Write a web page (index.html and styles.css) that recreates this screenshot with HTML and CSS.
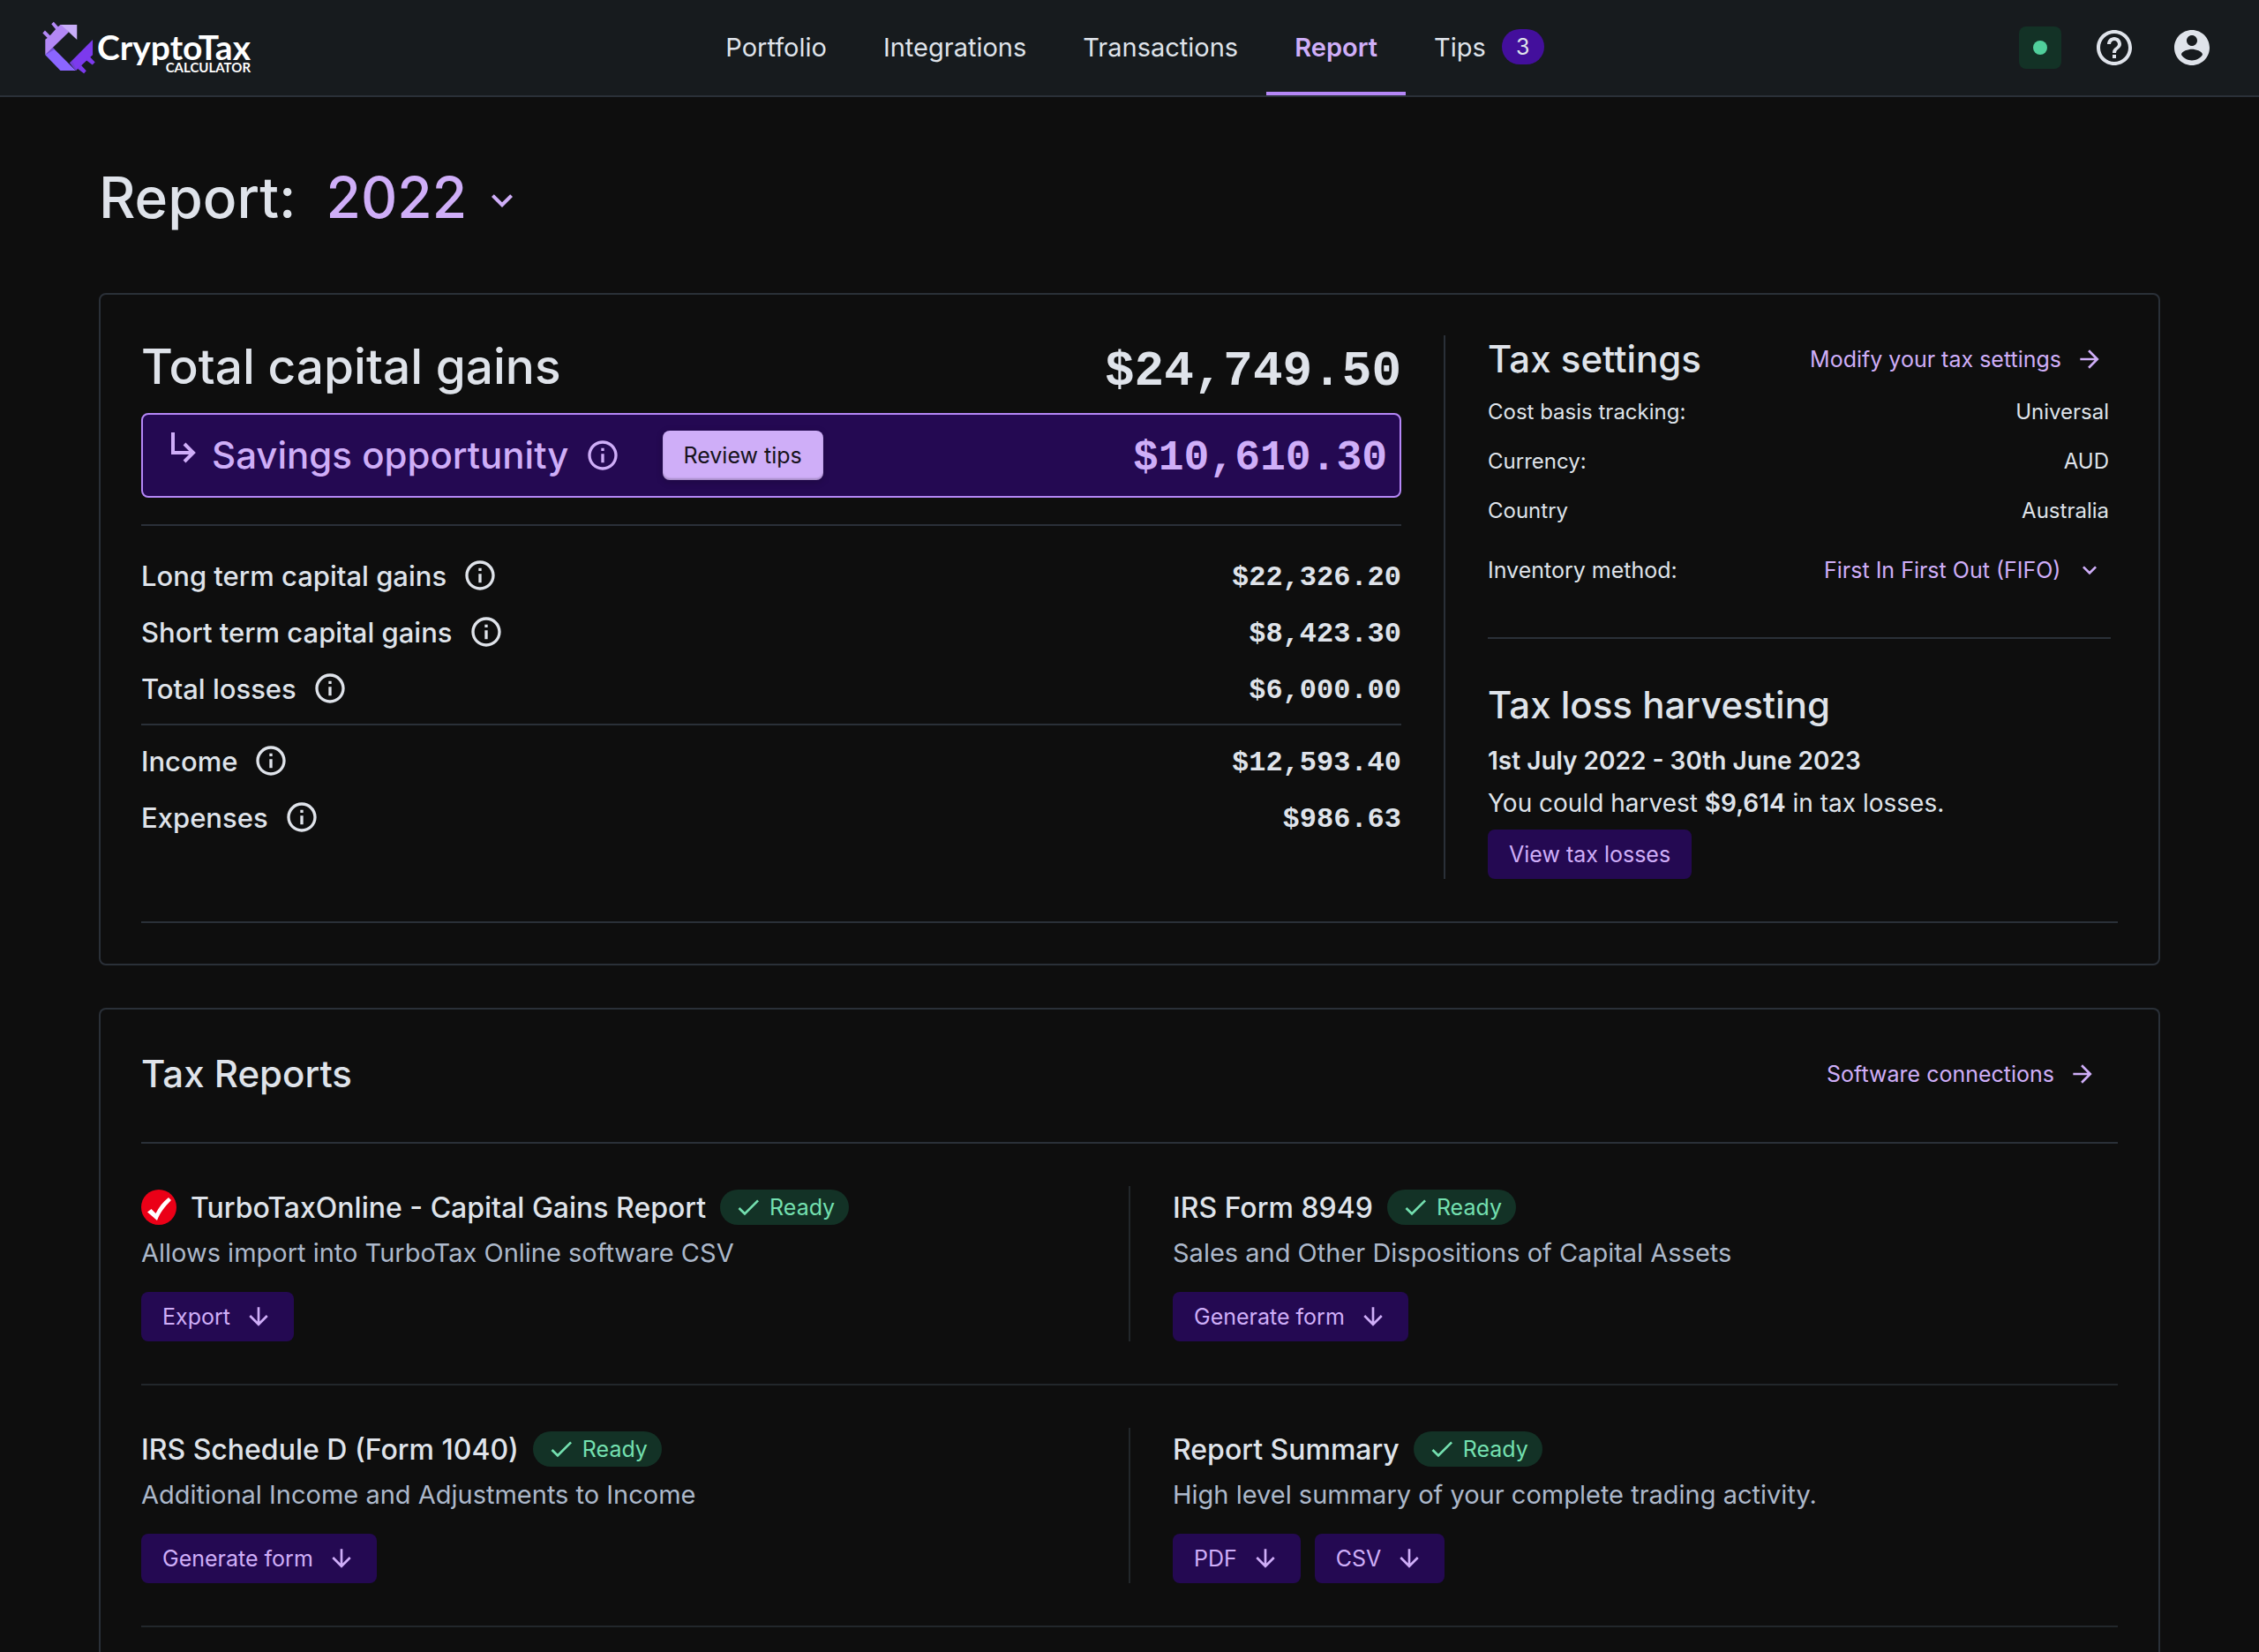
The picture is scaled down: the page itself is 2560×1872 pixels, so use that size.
FILE: index.html
```html
<!DOCTYPE html>
<html lang="en">
<head>
<meta charset="utf-8">
<title>CryptoTaxCalculator - Report</title>
<meta name="viewport" content="width=device-width, initial-scale=1">
<link rel="stylesheet" href="styles.css">
</head>
<body>
<svg class="sprite" aria-hidden="true">
  <symbol id="info" viewBox="0 0 24 24"><path d="M11 7h2v2h-2zm0 4h2v6h-2zm1-9C6.48 2 2 6.48 2 12s4.480 10 10 10 10-4.480 10-10S17.520 2 12 2zm0 18c-4.410 0-8-3.590-8-8s3.590-8 8-8 8 3.590 8 8-3.590 8-8 8z"/></symbol>
  <symbol id="chevron" viewBox="0 0 24 24"><path d="M16.590 8.590 12 13.170 7.410 8.590 6 10l6 6 6-6z"/></symbol>
  <symbol id="arrow-right" viewBox="0 0 24 24"><path d="m12 4-1.410 1.410L16.170 11H4v2h12.170l-5.580 5.590L12 20l8-8z"/></symbol>
  <symbol id="arrow-down" viewBox="0 0 24 24"><path d="m20 12-1.410-1.410L13 16.170V4h-2v12.170l-5.580-5.590L4 12l8 8z"/></symbol>
  <symbol id="check" viewBox="0 0 24 24"><path d="M9 16.170 4.830 12l-1.420 1.410L9 19 21 7l-1.410-1.410z"/></symbol>
</svg>

<header class="topbar">
  <a class="logo" href="#" aria-label="CryptoTaxCalculator home">
    <svg class="logo-mark" viewBox="22 22 182 180" aria-hidden="true">
      <path fill="#b388f5" d="M32 84 45 74 72 44 84 33H92L113 58 32 137z"/>
      <path fill="#b388f5" d="M23 62 31 53 50 72 42 81zM53 31 61 23 79 43 70 51z"/>
      <path fill="#c9aef9" d="M86 33H141V85z"/>
      <path fill="#8b66ff" d="M32 137 58 112 137 191H84z"/>
      <path fill="#7c3aed" d="M195 85V137L137 191 116 164z"/>
      <path fill="#7c3aed" d="M173 155 183 141 203 162 194 171zM143 184 155 172 173 192 165 201z"/>
      <path fill="#6a41c9" d="M116 164 124 157 140 189 137 191zM32 137 58 112 64 118z" opacity=".7"/>
    </svg>
    <span class="logo-text"><span class="logo-name">CryptoTax</span><span class="logo-sub">CALCULATOR</span></span>
  </a>
  <nav class="nav" aria-label="Main">
    <a href="#">Portfolio</a>
    <a href="#">Integrations</a>
    <a href="#">Transactions</a>
    <a class="current" href="#" aria-current="page">Report</a>
    <a href="#">Tips <span class="count">3</span></a>
  </nav>
  <div class="tools">
    <button class="status" type="button" aria-label="Status"><span class="dot"></span></button>
    <button class="tool" type="button" aria-label="Help">
      <svg viewBox="0 0 24 24"><path d="M11 18h2v-2h-2v2zm1-16C6.480 2 2 6.480 2 12s4.480 10 10 10 10-4.480 10-10S17.520 2 12 2zm0 18c-4.410 0-8-3.590-8-8s3.590-8 8-8 8 3.590 8 8-3.590 8-8 8zm0-14c-2.210 0-4 1.790-4 4h2c0-1.100.9-2 2-2s2 .9 2 2c0 2-3 1.750-3 5h2c0-2.250 3-2.500 3-5 0-2.210-1.790-4-4-4z"/></svg>
    </button>
    <button class="tool" type="button" aria-label="Account">
      <svg viewBox="0 0 24 24"><path d="M12 2C6.480 2 2 6.480 2 12s4.480 10 10 10 10-4.480 10-10S17.520 2 12 2zm0 3c1.660 0 3 1.340 3 3s-1.340 3-3 3-3-1.340-3-3 1.340-3 3-3zm0 14.200c-2.500 0-4.710-1.280-6-3.220.03-1.990 4-3.080 6-3.080 1.990 0 5.970 1.090 6 3.080-1.290 1.940-3.500 3.220-6 3.220z"/></svg>
    </button>
  </div>
</header>

<main class="page">
  <h1 class="page-title">
    <label for="year">Report:</label>
    <span class="picker picker-year">
      <select id="year"><option>2022</option></select>
      <svg aria-hidden="true"><use href="#chevron"/></svg>
    </span>
  </h1>

  <section class="card summary">
    <div class="summary-columns">
      <div class="gains">
        <div class="total"><h2>Total capital gains</h2><span class="amount">$24,749.50</span></div>
        <div class="savings">
          <svg class="bend" viewBox="0 0 28 52" aria-hidden="true"><path d="M2 0V23H25M15 13 25 23 15 33"/></svg>
          <span class="savings-label">Savings opportunity</span>
          <svg class="icon-info" aria-hidden="true"><use href="#info"/></svg>
          <button class="btn btn-light" type="button">Review tips</button>
          <span class="amount">$10,610.30</span>
        </div>
        <dl class="lines">
          <div><dt>Long term capital gains <svg class="icon-info" aria-hidden="true"><use href="#info"/></svg></dt><dd>$22,326.20</dd></div>
          <div><dt>Short term capital gains <svg class="icon-info" aria-hidden="true"><use href="#info"/></svg></dt><dd>$8,423.30</dd></div>
          <div><dt>Total losses <svg class="icon-info" aria-hidden="true"><use href="#info"/></svg></dt><dd>$6,000.00</dd></div>
        </dl>
        <dl class="lines lines-last">
          <div><dt>Income <svg class="icon-info" aria-hidden="true"><use href="#info"/></svg></dt><dd>$12,593.40</dd></div>
          <div><dt>Expenses <svg class="icon-info" aria-hidden="true"><use href="#info"/></svg></dt><dd>$986.63</dd></div>
        </dl>
      </div>
      <div class="side">
        <div class="side-head">
          <h3>Tax settings</h3>
          <a class="link" href="#">Modify your tax settings <svg aria-hidden="true"><use href="#arrow-right"/></svg></a>
        </div>
        <dl class="settings">
          <div><dt>Cost basis tracking:</dt><dd>Universal</dd></div>
          <div><dt>Currency:</dt><dd>AUD</dd></div>
          <div><dt>Country</dt><dd>Australia</dd></div>
        </dl>
        <div class="method">
          <label for="method">Inventory method:</label>
          <span class="picker picker-method">
            <select id="method"><option>First In First Out (FIFO)</option></select>
            <svg aria-hidden="true"><use href="#chevron"/></svg>
          </span>
        </div>
        <div class="harvest">
          <h3>Tax loss harvesting</h3>
          <p class="period">1st July 2022 - 30th June 2023</p>
          <p>You could harvest <strong>$9,614</strong> in tax losses.</p>
          <button class="btn" type="button">View tax losses</button>
        </div>
      </div>
    </div>
  </section>

  <section class="card reports">
    <div class="reports-head">
      <h3>Tax Reports</h3>
      <a class="link" href="#">Software connections <svg aria-hidden="true"><use href="#arrow-right"/></svg></a>
    </div>
    <div class="report-row">
      <article class="report">
        <div class="report-title">
          <svg class="turbo" viewBox="0 0 40 40" aria-hidden="true"><circle cx="20" cy="20" r="20" fill="#eb0017"/><path fill="#fff" d="M7 25.500 11.500 22 16.500 27C20 20 24.500 14 31 9L34 12C27 19 21.500 26 18 35z"/></svg>
          <h4>TurboTaxOnline - Capital Gains Report</h4>
          <span class="ready"><svg aria-hidden="true"><use href="#check"/></svg>Ready</span>
        </div>
        <p>Allows import into TurboTax Online software CSV</p>
        <div class="actions"><button class="btn" type="button">Export <svg aria-hidden="true"><use href="#arrow-down"/></svg></button></div>
      </article>
      <article class="report">
        <div class="report-title">
          <h4>IRS Form 8949</h4>
          <span class="ready"><svg aria-hidden="true"><use href="#check"/></svg>Ready</span>
        </div>
        <p>Sales and Other Dispositions of Capital Assets</p>
        <div class="actions"><button class="btn" type="button">Generate form <svg aria-hidden="true"><use href="#arrow-down"/></svg></button></div>
      </article>
    </div>
    <div class="report-row">
      <article class="report">
        <div class="report-title">
          <h4>IRS Schedule D (Form 1040)</h4>
          <span class="ready"><svg aria-hidden="true"><use href="#check"/></svg>Ready</span>
        </div>
        <p>Additional Income and Adjustments to Income</p>
        <div class="actions"><button class="btn" type="button">Generate form <svg aria-hidden="true"><use href="#arrow-down"/></svg></button></div>
      </article>
      <article class="report">
        <div class="report-title">
          <h4>Report Summary</h4>
          <span class="ready"><svg aria-hidden="true"><use href="#check"/></svg>Ready</span>
        </div>
        <p>High level summary of your complete trading activity.</p>
        <div class="actions">
          <button class="btn" type="button">PDF <svg aria-hidden="true"><use href="#arrow-down"/></svg></button>
          <button class="btn" type="button">CSV <svg aria-hidden="true"><use href="#arrow-down"/></svg></button>
        </div>
      </article>
    </div>
  </section>
</main>
</body>
</html>
```
FILE: styles.css
```css
:root {
  --bg: #0e0e0e;
  --bar: #171b1e;
  --line: #2a3038;
  --line-soft: #22272b;
  --text: #dfe3ea;
  --muted: #acb8ca;
  --accent: #cfaef8;
  --accent-strong: #b587f7;
  --deep: #240952;
  --green: #74e0b0;
  --green-bg: #133226;
}

*, *::before, *::after { box-sizing: border-box; }

body {
  margin: 0;
  min-height: 100vh;
  display: flex;
  flex-direction: column;
  background: var(--bg);
  color: var(--text);
  font-family: Inter, "Liberation Sans", sans-serif;
  font-size: 25px;
}

h1, h2, h3, h4, p, dl, dd { margin: 0; }
h1, h2, h3, h4 { font-weight: 500; }
a { color: inherit; text-decoration: none; }
svg { flex: none; fill: currentColor; }
button, select { font: inherit; color: inherit; background: none; border: 0; padding: 0; margin: 0; cursor: pointer; }
.sprite { display: none; }

/* Top bar */
.topbar {
  display: grid;
  grid-template-columns: 1fr auto 1fr;
  height: 110px;
  padding: 0 36px 0 48px;
  background: var(--bar);
  border-bottom: 2px solid var(--line);
}
.logo { display: flex; align-items: center; gap: 2px; color: #fff; font-family: Lato, sans-serif; }
.logo-mark { width: 60px; height: 60px; }
.logo-text { display: flex; flex-direction: column; align-items: flex-end; padding-top: 10px; }
.logo-name { font-size: 39px; font-weight: 700; line-height: 34px; }
.logo-sub { font-size: 15px; font-weight: 700; line-height: 12px; }
.nav { display: flex; }
.nav a {
  display: flex;
  align-items: center;
  gap: 18px;
  padding: 6px 32px 4px;
  border-bottom: 4px solid transparent;
  font-size: 29px;
}
.nav .current { color: var(--accent); border-color: var(--accent-strong); font-weight: 600; }
.nav .count {
  width: 48px;
  border-radius: 20px;
  background: #430f9c;
  font-size: 25px;
  line-height: 40px;
  text-align: center;
}
.tools { display: flex; align-items: center; justify-content: flex-end; }
.status { display: grid; place-items: center; width: 48px; height: 48px; margin-right: 16px; border-radius: 8px; background: var(--green-bg); }
.dot { width: 16px; height: 16px; border-radius: 50%; background: #50cf9b; }
.tool { display: grid; place-items: center; width: 88px; height: 88px; }
.tool:last-child { width: 80px; margin-left: 4px; }
.tool svg { width: 48px; height: 48px; }

/* Page */
.page { flex: 1; display: flex; flex-direction: column; padding: 66px 112px 0; }
.page-title { display: flex; gap: 34px; margin-bottom: 60px; font-size: 64px; line-height: 96px; }

.picker { display: inline-grid; align-items: center; color: var(--accent); }
.picker select, .picker svg { grid-area: 1 / 1; }
.picker select { appearance: none; outline: 0; }
.picker svg { justify-self: end; pointer-events: none; }
.picker-year select { height: 96px; padding-right: 64px; }
.picker-year svg { width: 48px; height: 48px; margin-top: 6px; }
.picker-method select { height: 56px; padding-right: 56px; }
.picker-method svg { width: 32px; height: 32px; margin-right: 8px; }

.card { padding: 46px; border: 2px solid var(--line); border-radius: 8px; }
h3 { font-size: 42px; line-height: 54px; }

.amount, .lines dd { font-family: "Liberation Mono", monospace; font-weight: 700; }

.btn {
  display: inline-flex;
  align-items: center;
  gap: 16px;
  height: 56px;
  padding: 0 24px;
  border-radius: 8px;
  background: var(--deep);
  color: var(--accent);
  font-size: 25px;
}
.btn svg { width: 32px; height: 32px; }
.btn-light { background: var(--accent); color: #17131c; box-shadow: inset 0 -2px 2px #00000033, 0 2px 8px #00000033; }

.link { display: flex; align-items: center; gap: 16px; color: var(--accent); }
.link svg { width: 32px; height: 32px; }

/* Summary */
.summary { margin-bottom: 48px; }
.summary-columns {
  display: grid;
  grid-template-columns: 1476fr 764fr;
  padding-bottom: 48px;
  border-bottom: 2px solid var(--line);
}
.gains { padding-right: 48px; }
.total { display: flex; align-items: center; justify-content: space-between; height: 88px; padding-bottom: 18px; }
h2 { font-size: 55px; line-height: 64px; }
.total .amount { padding-top: 12px; font-size: 56px; }
.savings {
  display: flex;
  align-items: center;
  height: 96px;
  margin-bottom: 30px;
  padding: 0 14px 0 32px;
  border: 2px solid var(--accent-strong);
  border-radius: 8px;
  background: var(--deep);
  color: var(--accent);
}
.bend { width: 28px; height: 52px; margin-right: 18px; fill: none; stroke: currentColor; stroke-width: 4; }
.savings-label { padding-bottom: 2px; font-size: 42px; font-weight: 500; }
.savings .icon-info { margin: 0 48px 0 18px; }
.savings .amount { margin-left: auto; padding-top: 6px; font-size: 48px; }
.icon-info { width: 40px; height: 40px; }

.lines { padding: 24px 0 8px; border-top: 2px solid var(--line); font-size: 31px; }
.lines-last { padding-top: 8px; }
.lines div { display: flex; align-items: center; justify-content: space-between; height: 64px; }
.lines dt { display: flex; align-items: center; gap: 18px; font-weight: 500; }
.lines dd { padding-top: 4px; font-size: 32px; }

.side { padding: 0 8px 0 48px; border-left: 2px solid var(--line); }
.side-head { display: flex; justify-content: space-between; height: 58px; padding: 0 8px 4px 0; }
.settings { padding-right: 2px; font-size: 24px; }
.settings div { display: flex; align-items: center; justify-content: space-between; height: 56px; }
.method { display: flex; align-items: center; justify-content: space-between; height: 116px; padding-bottom: 36px; }
.harvest { padding-top: 48px; border-top: 2px solid var(--line); font-size: 28px; }
.harvest p { line-height: 48px; }
.harvest h3 { margin-bottom: 12px; }
.harvest .btn { margin-top: 6px; }
.period, strong { font-weight: 600; }

/* Tax reports */
.reports { flex: 1; padding-bottom: 0; border-bottom: 0; border-radius: 8px 8px 0 0; }
.reports-head { display: flex; justify-content: space-between; padding: 0 24px 50px 0; border-bottom: 2px solid var(--line); }
.report-row { display: grid; grid-template-columns: 1119fr 1121fr; padding: 48px 0; border-bottom: 2px solid var(--line-soft); }
.report + .report { padding-left: 48px; border-left: 2px solid var(--line-soft); }
.report-title { display: flex; align-items: center; gap: 16px; height: 48px; }
h4 { font-size: 32px; }
.turbo { width: 40px; height: 40px; }
.ready {
  display: flex;
  align-items: center;
  gap: 8px;
  height: 40px;
  padding: 0 16px;
  border-radius: 20px;
  background: var(--green-bg);
  color: var(--green);
}
.ready svg { width: 32px; height: 32px; }
.report p { padding-top: 4px; margin-bottom: 20px; color: var(--muted); font-size: 29px; line-height: 48px; }
.actions { display: flex; gap: 16px; }
```
